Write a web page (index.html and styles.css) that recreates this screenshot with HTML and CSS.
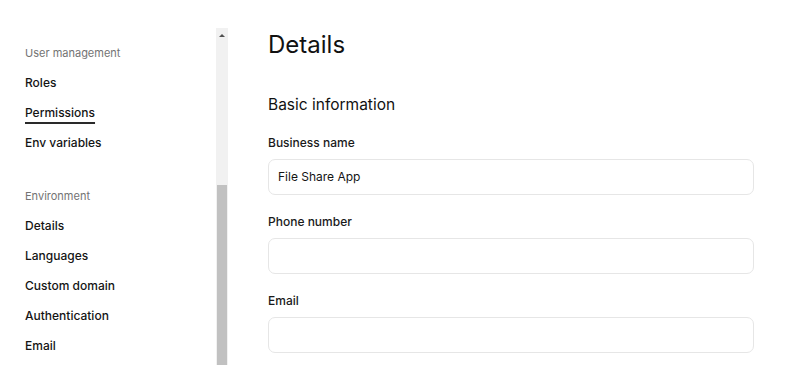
FILE: index.html
```html
<!DOCTYPE html>
<html lang="en">
<head>
<meta charset="utf-8">
<title>Details</title>
<link rel="stylesheet" href="styles.css">
</head>
<body>
<div class="page">
  <aside class="sidebar">
    <nav class="nav">
      <div class="group">
        <div class="group-title">User management</div>
        <a class="item">Roles</a>
        <a class="item"><span class="active">Permissions</span></a>
        <a class="item">Env variables</a>
      </div>
      <div class="group">
        <div class="group-title">Environment</div>
        <a class="item">Details</a>
        <a class="item">Languages</a>
        <a class="item">Custom domain</a>
        <a class="item">Authentication</a>
        <a class="item">Email</a>
      </div>
    </nav>
    <div class="scrollbar">
      <div class="arrow"></div>
      <div class="thumb"></div>
    </div>
  </aside>
  <main class="main">
    <h1 class="title">Details</h1>
    <h2 class="subtitle">Basic information</h2>
    <div class="field">
      <label class="label">Business name</label>
      <div class="input">File Share App</div>
    </div>
    <div class="field">
      <label class="label">Phone number</label>
      <div class="input"></div>
    </div>
    <div class="field">
      <label class="label">Email</label>
      <div class="input"></div>
    </div>
  </main>
</div>
</body>
</html>
```
FILE: styles.css
```css
* { box-sizing: border-box; }
html, body {
  margin: 0;
  height: 100%;
  overflow: hidden;
  background: #ffffff;
  font-family: Inter, "Noto Sans", sans-serif;
  color: #1a1a1a;
}
.page {
  display: flex;
  height: 100%;
}
.sidebar {
  width: 228px;
  flex: none;
  display: flex;
  padding-top: 28px;
}
.nav {
  flex: 1;
  padding: 10px 0 0 25px;
  display: flex;
  flex-direction: column;
  gap: 23px;
}
.group {
  display: flex;
  flex-direction: column;
}
.group-title {
  font-size: 11px;
  line-height: 30px;
  color: #737373;
}
.item {
  font-size: 12px;
  font-weight: 500;
  line-height: 30px;
  color: #141414;
  text-decoration: none;
}
.active {
  text-decoration: underline;
  text-decoration-thickness: 2px;
  text-underline-offset: 5px;
  text-decoration-color: #2a2a2a;
}
.scrollbar {
  width: 12px;
  flex: none;
  background: #f1f1f1;
  display: flex;
  flex-direction: column;
  align-items: center;
}
.arrow {
  margin-top: 6px;
  width: 0;
  height: 0;
  border-left: 3px solid transparent;
  border-right: 3px solid transparent;
  border-bottom: 3px solid #505050;
}
.thumb {
  margin-top: 148px;
  width: 10px;
  flex: 1;
  background: #c1c1c1;
}
.main {
  margin-left: 40px;
  width: 486px;
  padding-top: 29px;
}
.title {
  margin: 0;
  font-size: 24px;
  line-height: 32px;
  font-weight: 400;
  color: #111111;
}
.subtitle {
  margin: 32px 0 16px;
  font-size: 15.5px;
  line-height: 24px;
  font-weight: 400;
  color: #111111;
}
.field {
  display: flex;
  flex-direction: column;
  gap: 6px;
  margin-bottom: 17px;
}
.label {
  font-size: 12px;
  line-height: 20px;
  font-weight: 500;
  color: #1a1a1a;
}
.input {
  height: 36px;
  border: 1px solid #e6e6e6;
  border-radius: 7px;
  padding: 0 9px;
  font-size: 12px;
  line-height: 34px;
  color: #141414;
}
```
